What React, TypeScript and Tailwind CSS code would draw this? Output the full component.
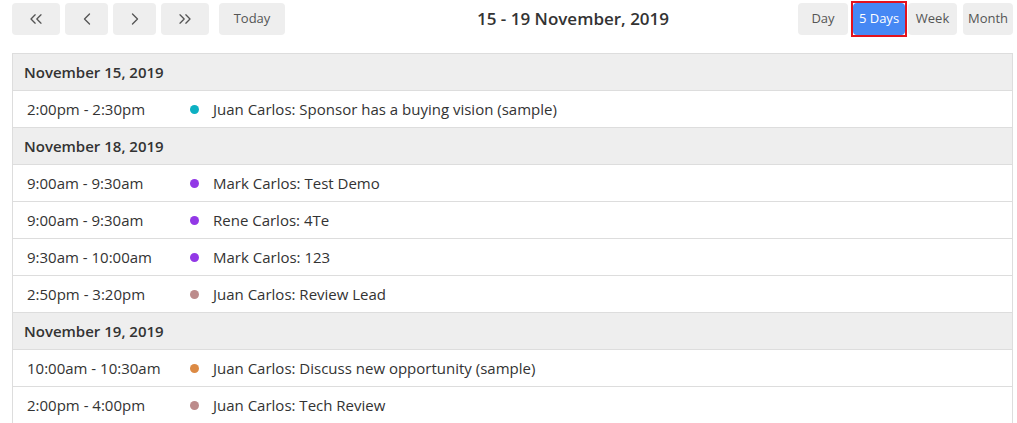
import { ChevronLeft, ChevronRight, ChevronsLeft, ChevronsRight } from "lucide-react";

type Ev = { time: string; title: string; color: string };
type Day = { date: string; events: Ev[] };

const days: Day[] = [
  {
    date: "November 15, 2019",
    events: [{ time: "2:00pm - 2:30pm", title: "Juan Carlos: Sponsor has a buying vision (sample)", color: "bg-[#0cb0c2]" }],
  },
  {
    date: "November 18, 2019",
    events: [
      { time: "9:00am - 9:30am", title: "Mark Carlos: Test Demo", color: "bg-[#9238e6]" },
      { time: "9:00am - 9:30am", title: "Rene Carlos: 4Te", color: "bg-[#9238e6]" },
      { time: "9:30am - 10:00am", title: "Mark Carlos: 123", color: "bg-[#9238e6]" },
      { time: "2:50pm - 3:20pm", title: "Juan Carlos: Review Lead", color: "bg-[#bc8b8b]" },
    ],
  },
  {
    date: "November 19, 2019",
    events: [
      { time: "10:00am - 10:30am", title: "Juan Carlos: Discuss new opportunity (sample)", color: "bg-[#dc8a44]" },
      { time: "2:00pm - 4:00pm", title: "Juan Carlos: Tech Review", color: "bg-[#bc8b8b]" },
    ],
  },
];

const base = "h-8 flex items-center justify-center rounded text-[13px]";
const btn = `${base} bg-[#eeeeee] text-[#555]`;

export default function App() {
  return (
    <div className="min-h-screen bg-white pl-3 pr-1 pt-[3px] text-[#333]" style={{ fontFamily: '"Open Sans", "Liberation Sans", sans-serif' }}>
      <div className="flex items-center h-8">
        <div className="flex gap-[5px]">
          <button className={`${btn} w-12`}>
            <ChevronsLeft className="w-5 h-5" strokeWidth={1.6} />
          </button>
          <button className={`${btn} w-[43px]`}>
            <ChevronLeft className="w-5 h-5" strokeWidth={1.6} />
          </button>
          <button className={`${btn} w-[43px]`}>
            <ChevronRight className="w-5 h-5" strokeWidth={1.6} />
          </button>
          <button className={`${btn} w-12`}>
            <ChevronsRight className="w-5 h-5" strokeWidth={1.6} />
          </button>
        </div>
        <button className={`${btn} w-[66px] ml-[10px]`}>Today</button>
        <div className="flex-1 pl-[192px]">
          <h2 className="text-[17px] font-semibold text-[#333]">15 - 19 November, 2019</h2>
        </div>
        <div className="flex items-center">
          <button className={`${btn} w-[50px]`}>Day</button>
          <span className="ml-[3px] border-2 border-[#e3121c]">
            <button className={`${base} w-[52px] bg-[#4688f4] text-white`}>5 Days</button>
          </span>
          <button className={`${btn} w-[49px] ml-[1px]`}>Week</button>
          <button className={`${btn} w-[50px] ml-[6px]`}>Month</button>
        </div>
      </div>

      <div className="mt-[18px] border border-[#dddddd] border-b-0 text-[15px]">
        {days.map((d) => (
          <div key={d.date}>
            <div className="h-[37px] flex items-center px-[11px] bg-[#eeeeee] border-b border-[#dddddd] font-semibold">
              {d.date}
            </div>
            {d.events.map((e, i) => (
              <div key={i} className="h-[37px] flex items-center border-b border-[#dddddd]">
                <div className="w-[177px] pl-[14px]">{e.time}</div>
                <span className={`w-[9px] h-[9px] rounded-full ${e.color}`} />
                <div className="pl-[14px]">{e.title}</div>
              </div>
            ))}
          </div>
        ))}
      </div>
    </div>
  );
}
